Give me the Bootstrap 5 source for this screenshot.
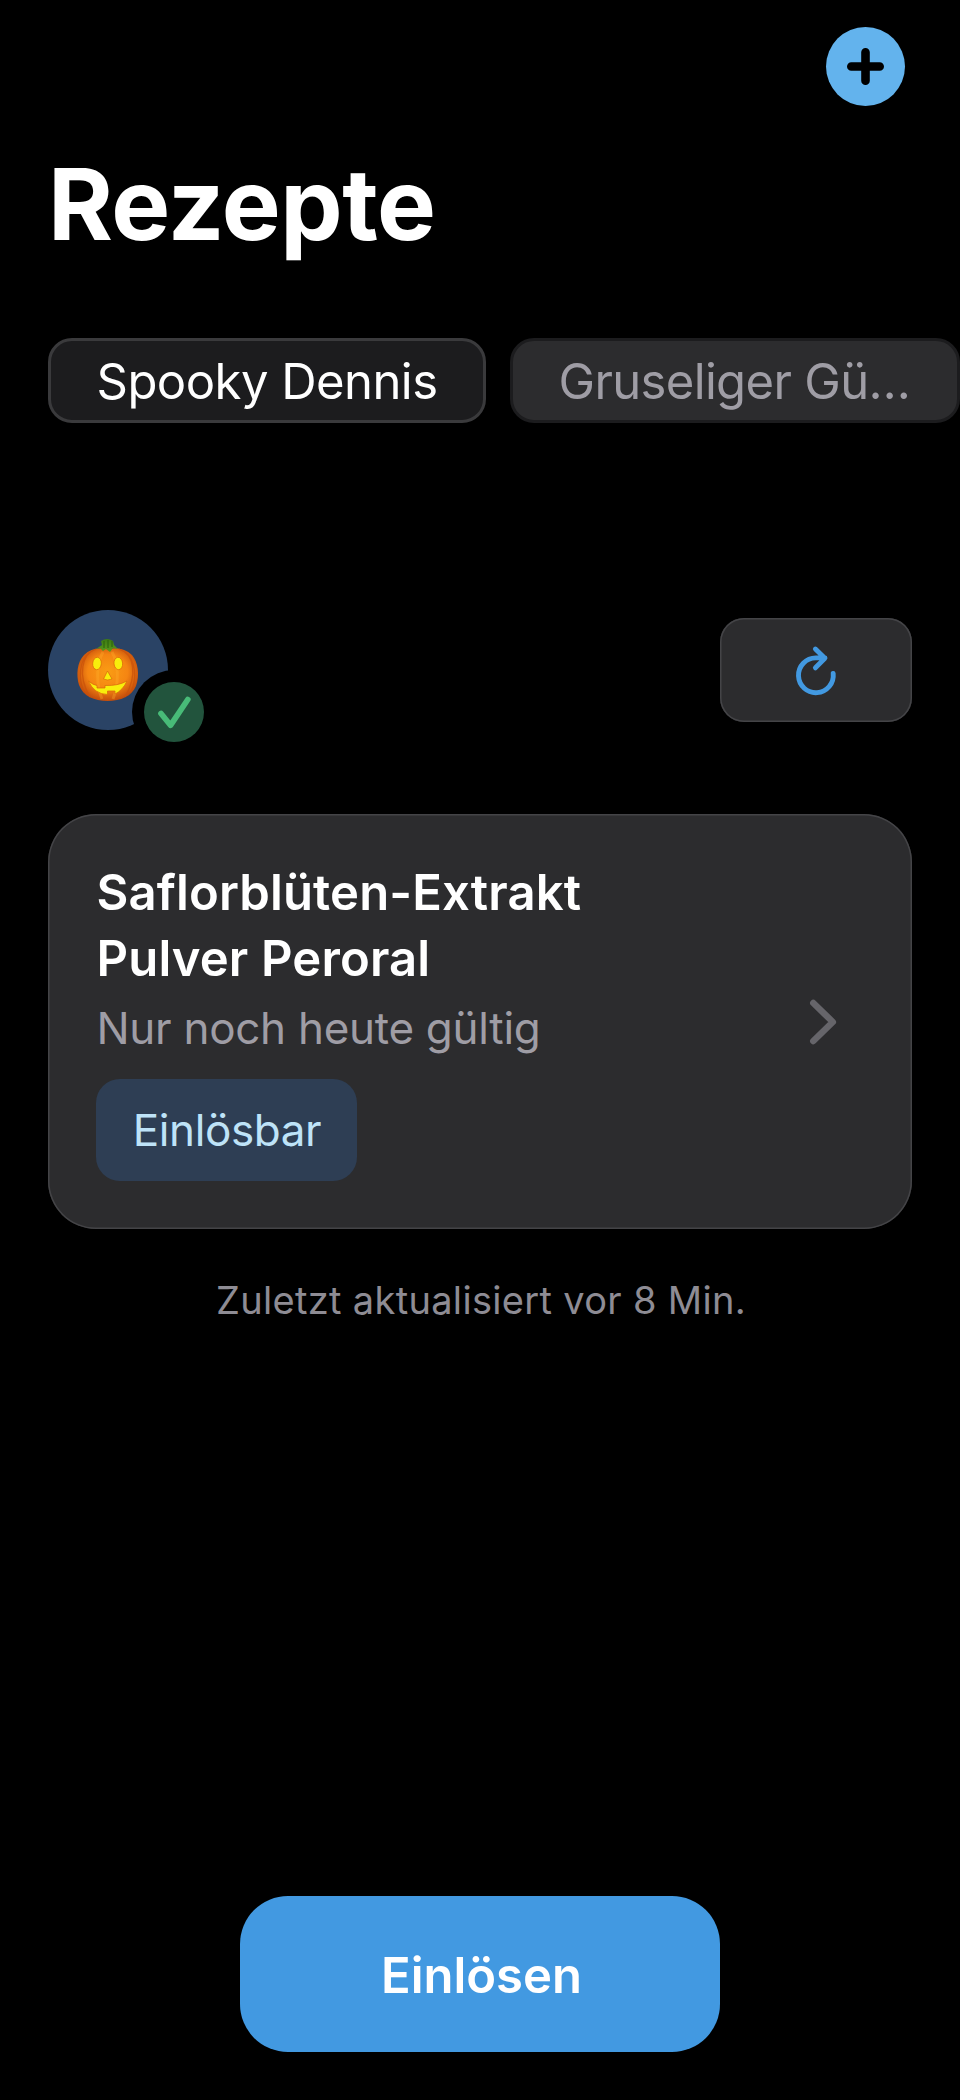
<!DOCTYPE html>
<html lang="de" data-bs-theme="dark">
<head>
<meta charset="utf-8">
<meta name="viewport" content="width=device-width, initial-scale=1">
<title>Rezepte</title>
<link rel="stylesheet" href="https://cdn.jsdelivr.net/npm/bootstrap@5.3.0/dist/css/bootstrap.min.css">
<style>
body{background:#000;color:#fff;font-family:Inter,"Liberation Sans",sans-serif;overflow-x:hidden}
.screen{width:960px;height:2100px;overflow:hidden}
.topbar{padding:27px 55px 0 0}
.add-btn{width:79px;height:79px;background:#63b3ed}
.page-title{font-size:99px;line-height:120px;font-weight:700;letter-spacing:-.55px;margin:38px 0 0 48px}
.tabs-row{margin:74px 0 0 48px;gap:24px}
.chip{height:85px;border:3px solid #3a3a3c;border-radius:24px;background:#1c1c1e;font-size:49px;line-height:1;letter-spacing:-.54px;padding:1px 0 0 45.5px;color:#fff;white-space:nowrap}
.chip-a{width:438px}
.chip-b{width:450px;background:#2c2c2e;border-color:#1c1c1e;color:#9f9da5;letter-spacing:-.65px}
.profile{margin:187px 48px 0;height:120px}
.avatar{width:120px;height:120px;background:#2a4365}
.state{left:84px;top:60px;width:84px;height:84px;background:#000}
.refresh{width:192px;height:104px;border:0;box-shadow:inset 0 0 0 1.5px #444447;border-radius:24px;background:#2c2c2e}
.rx{margin:84px 48px 0;height:414.5px;box-shadow:inset 0 0 0 1.5px #444447;border-radius:48px;background:#2c2c2e;padding:46px 75.5px 0 48px}
.rx-name{font-size:49px;line-height:66px;font-weight:600;letter-spacing:.14px;margin:0;padding-left:.5px}
.rx-info{font-size:44px;line-height:56px;letter-spacing:-.29px;color:#9f9da5;margin:8px 0 0;padding-left:.5px}
.rx-badge{width:261px;height:102px;border-radius:24px;background:#2e3e54;color:#bee3f8;font-size:44px;line-height:1;letter-spacing:-.4px;padding-left:1px;margin-top:23px}
.updated{margin:47.5px 0 0;padding-left:2px;font-size:38px;line-height:48px;letter-spacing:.32px;color:#8e8c94}
.redeem{width:480px;height:156px;margin-top:572px;border:0;border-radius:48px;background:#4299e1;color:#fff;font-size:49px;font-weight:600;line-height:1;padding:2px 0 0 3px}
</style>
</head>
<body>
<main class="screen d-flex flex-column">
  <header class="topbar d-flex justify-content-end">
    <button class="add-btn btn p-0 border-0 rounded-circle" aria-label="Hinzufügen">
      <svg class="d-block" width="79" height="79" viewBox="0 0 79 79" fill="none" stroke="#000" stroke-width="8.6" stroke-linecap="round"><path d="M25.3 39.5H53.7M39.5 25.3V53.7"/></svg>
    </button>
  </header>
  <h1 class="page-title">Rezepte</h1>
  <nav class="tabs-row d-flex">
    <div class="chip chip-a d-flex align-items-center flex-shrink-0">Spooky Dennis</div>
    <div class="chip chip-b d-flex align-items-center flex-shrink-0">Gruseliger Gü…</div>
  </nav>
  <section class="profile d-flex align-items-center justify-content-between">
    <div class="avatar rounded-circle position-relative">
      <svg class="d-block" width="120" height="120" viewBox="0 0 120 120">
        <defs>
          <radialGradient id="skin" cx=".5" cy=".45" r=".6"><stop offset="0" stop-color="#fa9d14"/><stop offset=".55" stop-color="#f58512"/><stop offset="1" stop-color="#b8400a"/></radialGradient>
          <linearGradient id="stem" x2="0" y2="1"><stop offset="0" stop-color="#3c7a12"/><stop offset="1" stop-color="#5b9a1b"/></linearGradient>
        </defs>
        <path d="M59.500 39C50 37 42 39 36 45C29 52 28 65 31 75C35 86 46 91 59.500 91C73 91 84 86 88 76C92 65 90 52 84 45C78 39 69 37 59.500 39Z" fill="url(#skin)"/>
        <path d="M48 39C34 44 29 65 42 87M71 39C86 44 90 65 77 87M42 42C31 50 30 69 36 82M77 42C88 50 89 69 83 82" fill="none" stroke="#c9520b" stroke-width="1.3" opacity=".75"/>
        <path d="M55 42C48 54 48 74 54 89M64 42C71 54 71 74 65 89" fill="none" stroke="#ffb02a" stroke-width="3" opacity=".35"/>
        <path d="M53 31Q59 27 65 31L66 35L70 39L65 38L62 42L58 39L55 41L52 38L48 39L54 35Z" fill="url(#stem)"/>
        <path d="M56 31L56 38M60 30L60 38M64 31L64 37" stroke="#28600d" stroke-width="1"/>
        <g fill="#f8ee0c" stroke="#d9650a" stroke-width=".7">
          <ellipse cx="49" cy="53.5" rx="4.3" ry="6.2" transform="rotate(5 49 53.5)"/><ellipse cx="70.3" cy="53.5" rx="4.3" ry="6.2" transform="rotate(-5 70.3 53.5)"/>
          <path d="M59.500 61L64 69Q59.500 71 55.500 69Z"/>
          <path d="M40.500 71Q45 75 49 75.500V78H57V75.500Q70 76 79 71Q75 80 67 84V81H59.500V84.500Q46 84 40.500 71Z"/>
        </g>
      </svg>
      <span class="state position-absolute rounded-circle">
        <svg class="d-block" width="84" height="84" viewBox="0 0 84 84"><circle cx="42" cy="42" r="30" fill="#22543d"/><path d="M29 43.500L38.500 55.300L55.800 29.500" fill="none" stroke="#48bb78" stroke-width="5.700" stroke-linecap="round" stroke-linejoin="round"/></svg>
      </span>
    </div>
    <button class="refresh btn p-0 d-flex align-items-center justify-content-center" aria-label="Aktualisieren">
      <svg width="60" height="60" viewBox="-30 -30 60 60" fill="none" stroke="#4299e1" stroke-width="4.900" stroke-linecap="round" stroke-linejoin="round"><path d="M17.200 3.500A17.400 17.400 0 1 1 -.2 -12.100H9M-.6 -21L8.900 -11.700L-.6 -2.200"/></svg>
    </button>
  </section>
  <article class="rx d-flex justify-content-between">
    <div>
      <h2 class="rx-name">Saflorblüten-Extrakt<br>Pulver Peroral</h2>
      <p class="rx-info">Nur noch heute gültig</p>
      <div class="rx-badge d-flex align-items-center justify-content-center">Einlösbar</div>
    </div>
    <svg class="align-self-start" style="margin-top:139px" width="28" height="46" viewBox="0 0 28 46" fill="none" stroke="#66656a" stroke-width="6.500" stroke-linecap="round" stroke-linejoin="round"><path d="M4.300 4L23.800 23L4.300 42"/></svg>
  </article>
  <p class="updated text-center">Zuletzt aktualisiert vor 8 Min.</p>
  <button class="redeem btn align-self-center">Einlösen</button>
</main>
<script src="https://cdn.jsdelivr.net/npm/bootstrap@5.3.0/dist/js/bootstrap.bundle.min.js"></script>
</body>
</html>
